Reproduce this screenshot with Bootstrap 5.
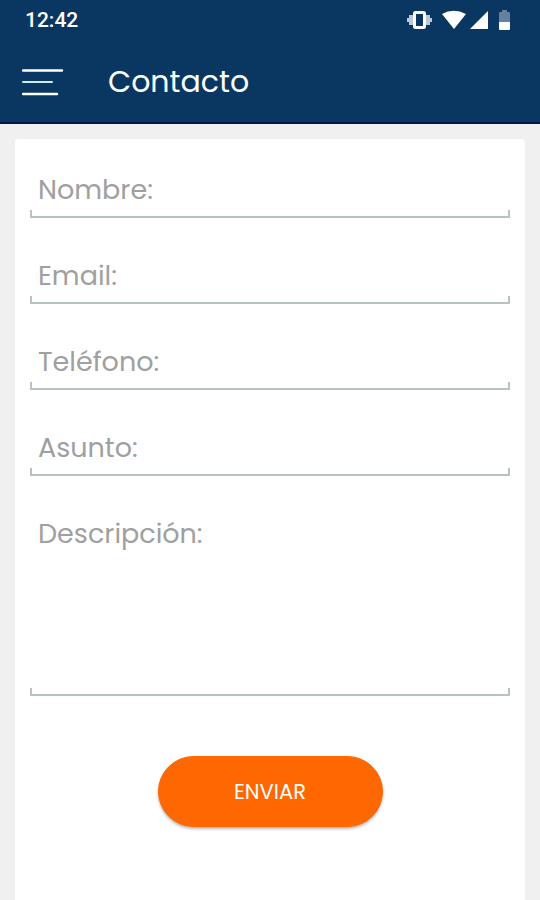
<!DOCTYPE html>
<html lang="es">
<head>
<meta charset="utf-8">
<meta name="viewport" content="width=device-width, initial-scale=1">
<title>Contacto</title>
<link href="https://cdn.jsdelivr.net/npm/bootstrap@5.3.0/dist/css/bootstrap.min.css" rel="stylesheet">
<style>
  body { background: #f0f0f0; font-family: Poppins, Inter, sans-serif; }
  .app-top { background: #0a3761; border-bottom: 2px solid #04144c; }
  .status-row { height: 40px; padding: 0 28px 0 25px; }
  .clock { font: 500 21px/24px Roboto, sans-serif; }
  .title-row { height: 82px; padding: 2px 22px 0; gap: 44px; }
  .screen-title { font-size: 30px; line-height: 40px; font-weight: 400; }
  .panel { margin: 15px 15px 0; padding: 23px 15px 40px; border-radius: 4px 4px 0 0; }
  .fields { gap: 30px; }
  .line-field {
    height: 56px; padding: 0 8px; gap: 8px;
    font-size: 27px; line-height: 56px; font-weight: 400; color: #a0a0a0;
    background:
      linear-gradient(#b9c3c4, #b9c3c4) left bottom / 100% 2px no-repeat,
      linear-gradient(#b9c3c4, #b9c3c4) left bottom / 2px 8px no-repeat,
      linear-gradient(#b9c3c4, #b9c3c4) right bottom / 2px 8px no-repeat;
  }
  .line-field-tall { height: 190px; }
  .line-field .form-control {
    min-width: 0; padding: 0; border: 0; border-radius: 0; background: none;
    font-size: 27px; line-height: 56px; font-weight: 400; color: #444; resize: none;
  }
  .line-field .form-control:focus { box-shadow: none; }
  .send-btn {
    width: 225px; height: 71px; margin-top: 60px;
    font-size: 21px; font-weight: 400;
    --bs-btn-color: #fff; --bs-btn-bg: #ff6700; --bs-btn-border-color: #ff6700;
    --bs-btn-hover-color: #fff; --bs-btn-hover-bg: #ec5f00; --bs-btn-hover-border-color: #ec5f00;
    box-shadow: 0 2px 3px rgba(0, 0, 0, .28);
  }
</style>
</head>
<body class="d-flex flex-column min-vh-100">
<header class="app-top text-white">
  <div class="status-row d-flex align-items-center justify-content-between">
    <span class="clock">12:42</span>
    <svg width="106" height="24" viewBox="0 0 106 24" aria-hidden="true">
      <g fill="#b9c8da"><rect x="1" y="10" width="2" height="4"/><rect x="3" y="7" width="4" height="10"/><rect x="20" y="7" width="4" height="10"/><rect x="24" y="10" width="2" height="4"/></g>
      <rect x="8.500" y="4.500" width="10" height="15" rx="1" fill="none" stroke="#fff" stroke-width="3"/>
      <path d="M36 6Q47.500-.5 60 6L48 21Z" fill="#fff"/>
      <path d="M82 3V21H64Z" fill="#fff"/>
      <path d="M93 14V5Q93 4 94 4H96V2H101V4H103Q104 4 104 5V14Z" fill="#6580a0"/>
      <path d="M93 14H104V21Q104 22 103 22H94Q93 22 93 21Z" fill="#fff"/>
    </svg>
  </div>
  <div class="title-row d-flex align-items-center">
    <button type="button" class="btn p-0 border-0 d-flex" aria-label="Abrir menú">
      <svg width="42" height="30" viewBox="0 0 42 30" fill="none" stroke-linecap="round" aria-hidden="true">
        <path d="M1 3.500H40M1 27H35" stroke="#fff" stroke-width="2.500"/>
        <path d="M1 15H30" stroke="#c5f0f2" stroke-width="2"/>
      </svg>
    </button>
    <h1 class="screen-title mb-0">Contacto</h1>
  </div>
</header>
<main class="panel bg-white flex-grow-1">
  <form>
    <div class="fields d-flex flex-column">
      <div class="line-field d-flex">
        <label for="nombre">Nombre:</label>
        <input id="nombre" type="text" class="form-control">
      </div>
      <div class="line-field d-flex">
        <label for="email">Email:</label>
        <input id="email" type="email" class="form-control">
      </div>
      <div class="line-field d-flex">
        <label for="telefono">Teléfono:</label>
        <input id="telefono" type="tel" class="form-control">
      </div>
      <div class="line-field d-flex">
        <label for="asunto">Asunto:</label>
        <input id="asunto" type="text" class="form-control">
      </div>
      <div class="line-field line-field-tall d-flex">
        <label for="descripcion">Descripción:</label>
        <textarea id="descripcion" class="form-control"></textarea>
      </div>
    </div>
    <div class="d-flex justify-content-center">
      <button type="submit" class="btn rounded-pill send-btn">ENVIAR</button>
    </div>
  </form>
</main>
<script src="https://cdn.jsdelivr.net/npm/bootstrap@5.3.0/dist/js/bootstrap.bundle.min.js"></script>
</body>
</html>
